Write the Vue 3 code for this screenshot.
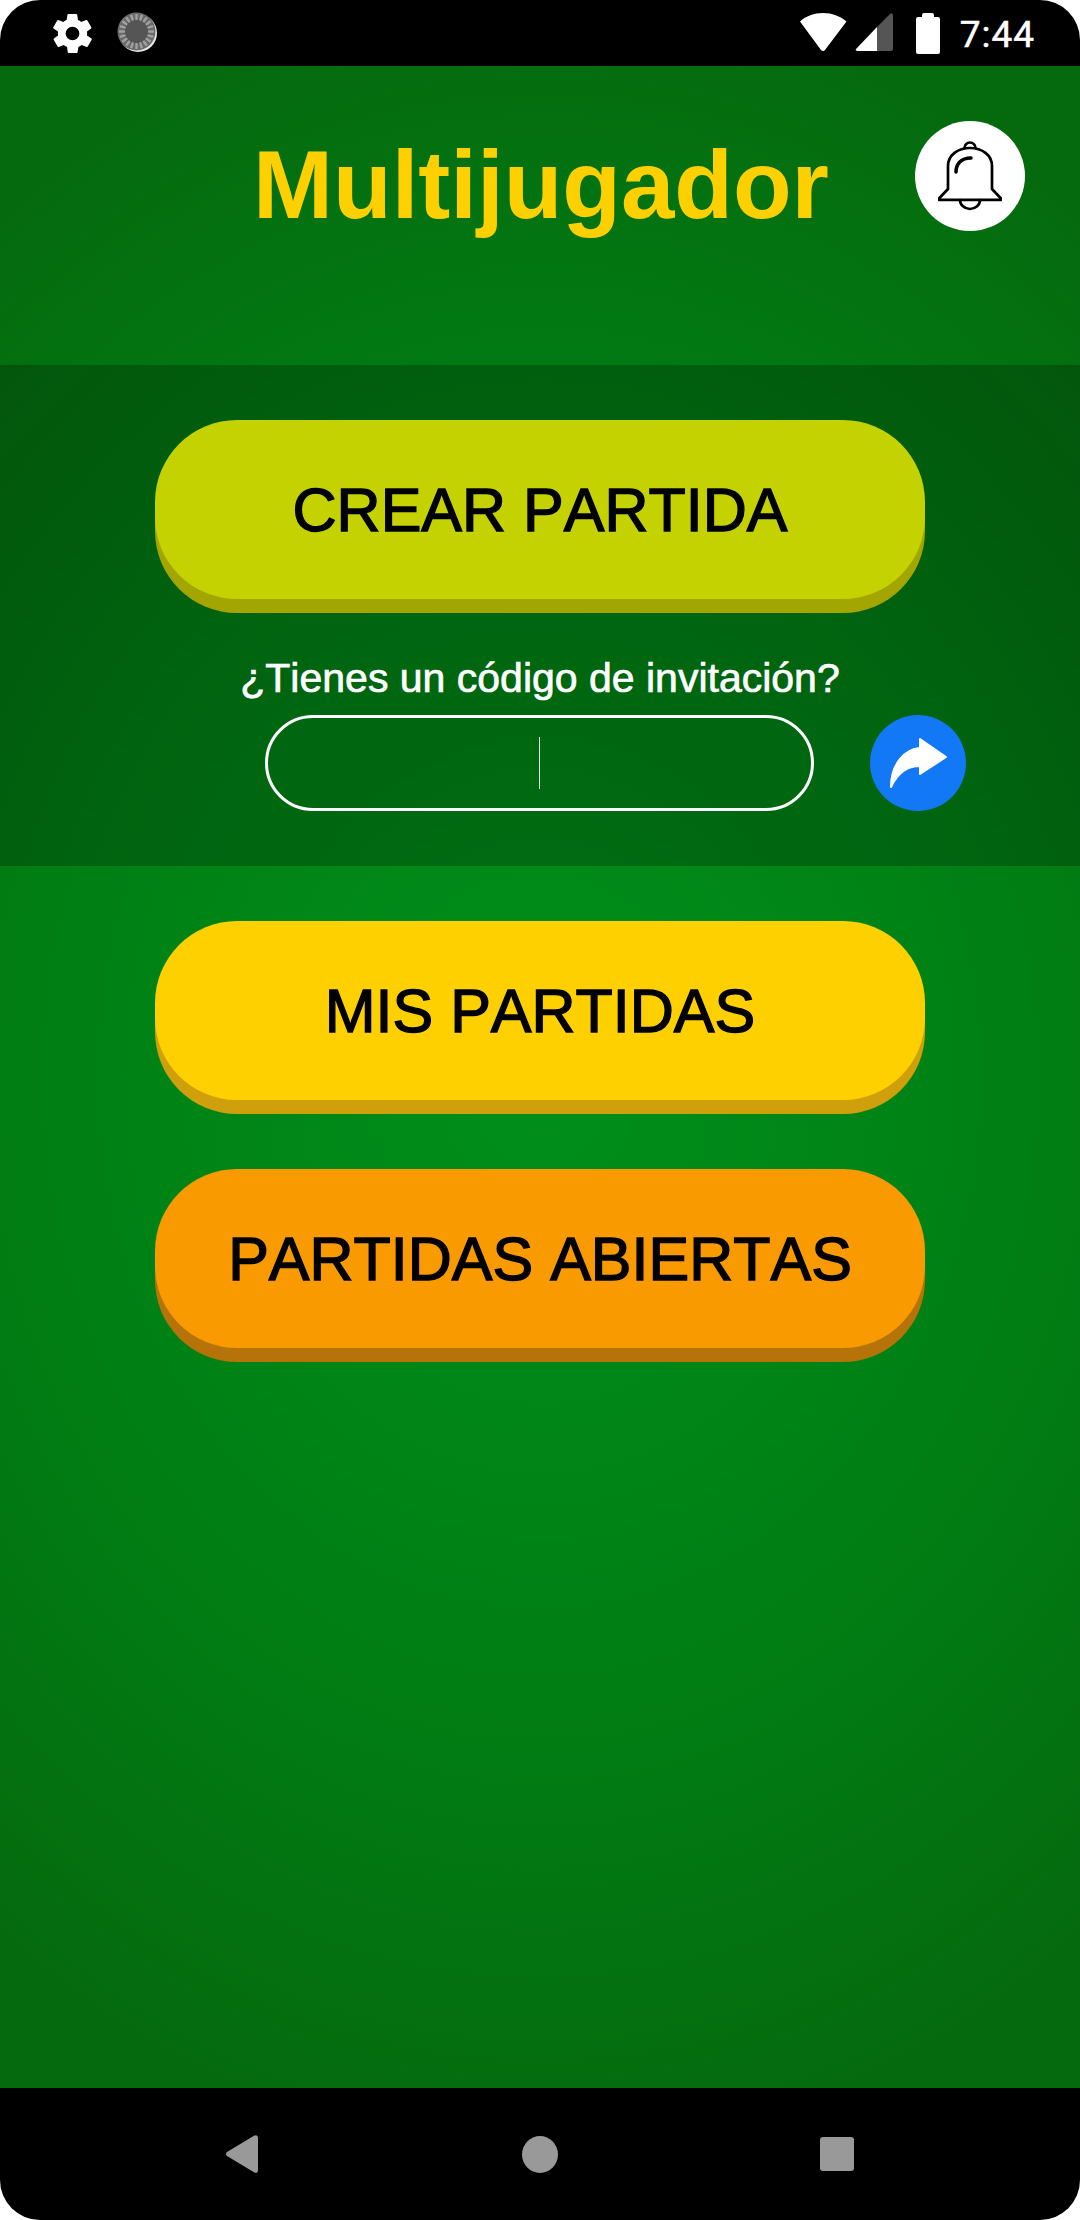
<template>
  <div class="phone">
    <div class="status-bar">
      <div class="status-left">
        <svg width="47" height="47" viewBox="0 0 24 24">
          <path fill="#fff" fill-rule="evenodd" d="M19.4 13a7.500 7.500 0 0 0 0-2l2.100-1.600a.5.5 0 0 0 .1-.6l-2-3.500a.5.5 0 0 0-.6-.2l-2.500 1a7.300 7.300 0 0 0-1.700-1l-.4-2.700a.5.5 0 0 0-.5-.4h-4a.5.5 0 0 0-.5.4l-.4 2.700a7.300 7.300 0 0 0-1.700 1l-2.500-1a.5.5 0 0 0-.6.2l-2 3.500a.5.5 0 0 0 .1.600L4.600 11a7.500 7.500 0 0 0 0 2l-2.100 1.600a.5.5 0 0 0-.1.600l2 3.500a.5.5 0 0 0 .6.200l2.500-1a7.300 7.300 0 0 0 1.700 1l.4 2.700a.5.5 0 0 0 .5.400h4a.5.5 0 0 0 .5-.4l.4-2.700a7.300 7.300 0 0 0 1.700-1l2.500 1a.5.5 0 0 0 .6-.2l2-3.500a.5.5 0 0 0-.1-.6zM12 15.500a3.500 3.500 0 1 1 0-7 3.500 3.500 0 0 1 0 7z" />
        </svg>
        <svg width="42" height="42" viewBox="0 0 42 42">
          <circle cx="21" cy="21" r="19" fill="#e8e8e8" />
          <circle cx="19.500" cy="19.500" r="19" fill="#6a6a6a" />
          <circle cx="19.500" cy="19.500" r="13" fill="#555" />
          <line
            v-for="a in ticks"
            :key="a"
            x1="19.500"
            y1="2"
            x2="19.500"
            y2="8"
            stroke="#a0a0a0"
            stroke-width="2.400"
            :transform="`rotate(${a} 19.500 19.500)`"
          />
        </svg>
      </div>
      <div class="status-right">
        <svg class="wifi" width="50" height="42" viewBox="0 0 50 42">
          <path fill="#fff" d="M1 9.500C7 4 15 1 24 1s17 3 23.500 8.500L26 38a2.500 2.500 0 0 1-4 0z" />
        </svg>
        <svg class="signal" width="38" height="40" viewBox="0 0 38 40">
          <path fill="#fff" d="M1 36 22 14v24H2.500C1 38 .3 37 1 36z" />
          <path fill="#555" d="M22 14 35 1c1-1 3-.5 3 1.500V36c0 1-1 2-2 2H22z" />
        </svg>
        <svg class="battery" width="24" height="42" viewBox="0 0 24 42">
          <path fill="#fff" d="M6 3a2 2 0 0 1 2-2h8a2 2 0 0 1 2 2v2h4a2 2 0 0 1 2 2v33a2 2 0 0 1-2 2H2a2 2 0 0 1-2-2V7a2 2 0 0 1 2-2h4z" />
        </svg>
        <span class="clock">7:44</span>
      </div>
    </div>

    <div class="content">
      <header class="top">
        <h1>Multijugador</h1>
        <button class="bell">
          <svg width="64" height="70" viewBox="0 0 64 70" fill="none" stroke="#000" stroke-width="2.700" stroke-linejoin="round" stroke-linecap="round">
            <path d="M26.500 7a5.500 5.500 0 0 1 11 0" />
            <path d="M10 48V25C10 14 20 7 32 7s22 7 22 18v23l9 9.500a.8.8 0 0 1-.6 1.400H1.600a.8.8 0 0 1-.6-1.400z" />
            <path d="M22 59a10 9 0 0 0 20 0" />
            <path d="M18 31c0-8 5-14 15-14" stroke-width="3.500" />
          </svg>
        </button>
      </header>

      <section class="panel">
        <button class="big lime">CREAR PARTIDA</button>
        <p class="invite-label">¿Tienes un código de invitación?</p>
        <div class="invite-row">
          <div class="code-input"><span class="caret"></span></div>
          <button class="send">
            <svg width="60" height="52" viewBox="0 0 60 52">
              <path fill="#fff" stroke="#fff" stroke-width="2" stroke-linejoin="round" d="M32 2 58 20 32 37V29C18 29 9 37 3 50 3 28 16 12 32 11z" />
            </svg>
          </button>
        </div>
      </section>

      <section class="menu">
        <button class="big yellow">MIS PARTIDAS</button>
        <button class="big orange">PARTIDAS ABIERTAS</button>
      </section>
    </div>

    <nav class="nav-bar">
      <svg width="32" height="38" viewBox="0 0 32 38">
        <path fill="#999" d="M1 21a2.500 2.500 0 0 1 0-4L28 .8c2-1.300 4-.3 4 2v32.400c0 2.300-2 3.300-4 2z" />
      </svg>
      <span class="home"></span>
      <span class="recent"></span>
    </nav>
  </div>
</template>

<script setup>
// marcas del icono de carga
const ticks = Array.from({ length: 20 }, (_, i) => i * 18)
</script>

<style>
html,
body {
  background: #fff;
}
</style>

<style scoped>
.phone {
  width: 1080px;
  height: 2220px;
  display: flex;
  flex-direction: column;
  border-radius: 40px;
  overflow: hidden;
  background: #000;
  font-family: "Liberation Sans", Arial, sans-serif;
  font-kerning: none;
}

.status-bar {
  height: 66px;
  flex: none;
  display: flex;
  justify-content: space-between;
  align-items: center;
  padding: 0 45px 0 49px;
}

.status-left,
.status-right {
  display: flex;
  align-items: center;
}

.status-left {
  gap: 21px;
}

.signal {
  margin-left: 6px;
}

.battery {
  margin-left: 23px;
  margin-right: 20px;
}

.clock {
  color: #fff;
  font-family: Roboto, sans-serif;
  font-size: 37px;
  letter-spacing: 1px;
  position: relative;
  top: 1px;
  -webkit-text-stroke: 0.5px #fff;
}

.content {
  flex: 1;
  display: flex;
  flex-direction: column;
  background: radial-gradient(ellipse 900px 1080px at 540px 1011px, #008f1a 0%, #007f14 55%, #056a0e 100%);
}

.top {
  height: 299px;
  flex: none;
  display: flex;
  justify-content: center;
  padding: 64px 0 0 2px;
  box-sizing: border-box;
  position: relative;
}

h1 {
  margin: 0;
  color: #ffd000;
  font-size: 96px;
  line-height: 110px;
  font-weight: bold;
}

.bell {
  position: absolute;
  top: 55px;
  left: 915px;
  width: 110px;
  height: 110px;
  border: none;
  border-radius: 50%;
  background: #fff;
  padding: 0;
  display: flex;
  align-items: center;
  justify-content: center;
}

.panel {
  height: 501px;
  flex: none;
  box-sizing: border-box;
  padding-top: 55px;
  display: flex;
  flex-direction: column;
  align-items: center;
  background: rgba(0, 0, 0, 0.22);
}

.big {
  width: 770px;
  height: 179px;
  flex: none;
  border: none;
  border-radius: 82px;
  padding: 0;
  color: #000;
  font-family: "Liberation Sans", Arial, sans-serif;
  font-kerning: none;
  font-size: 61px;
  -webkit-text-stroke: 1.400px #000;
}

.lime {
  background: #c3d200;
  box-shadow: 0 14px 0 #a3a500;
}

.yellow {
  background: #ffd000;
  box-shadow: 0 14px 0 #cf9f0c;
}

.orange {
  background: #f89a00;
  box-shadow: 0 14px 0 #b5730a;
}

.invite-label {
  margin: 42px 0 0;
  padding-top: 14px;
  color: #fff;
  font-size: 41px;
  line-height: 46px;
  -webkit-text-stroke: 0.7px #fff;
}

.invite-row {
  margin-top: 14px;
  width: 100%;
  box-sizing: border-box;
  padding-left: 265px;
  display: flex;
  gap: 56px;
}

.code-input {
  width: 549px;
  height: 96px;
  box-sizing: border-box;
  border: 3px solid #fff;
  border-radius: 48px;
  display: flex;
  align-items: center;
  justify-content: center;
}

.caret {
  width: 1px;
  height: 52px;
  background: #e8f0e8;
}

.send {
  width: 96px;
  height: 96px;
  border: none;
  border-radius: 50%;
  background: #1278f5;
  padding: 0;
  display: flex;
  align-items: center;
  justify-content: center;
}

.menu {
  flex: 1;
  box-sizing: border-box;
  padding-top: 55px;
  display: flex;
  flex-direction: column;
  align-items: center;
  gap: 69px;
}

.nav-bar {
  height: 132px;
  flex: none;
  display: flex;
  align-items: center;
  padding-left: 226px;
  gap: 264px;
}

.home {
  width: 36px;
  height: 37px;
  border-radius: 50%;
  background: #999;
}

.recent {
  margin-left: -2px;
  width: 34px;
  height: 34px;
  border-radius: 3px;
  background: #999;
}
</style>
